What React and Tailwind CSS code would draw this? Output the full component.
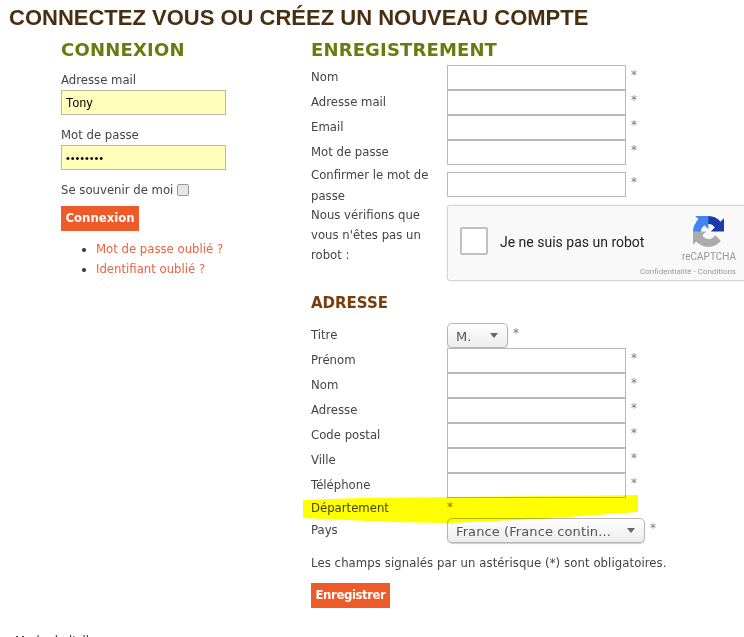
import React from 'react';

const field = 'w-[179px] h-[25px] border border-[#b9b9b9] bg-white block';

function Star({ className = '' }) {
  return <span className={`text-[#777] text-[12px] leading-none ${className}`}>*</span>;
}

function Row({ label }) {
  return (
    <div className="flex h-[25px]">
      <div className="w-[136px] shrink-0 leading-[25px]">{label}</div>
      <input className={field} />
      <Star className="ml-[5px] mt-[4px]" />
    </div>
  );
}

function Select({ width, value }) {
  return (
    <div
      className={`${width} h-[25px] flex items-center justify-between pl-[8px] pr-[9px] border border-[#b4b4b4] rounded-[5px] bg-gradient-to-b from-white to-[#ececec] shadow-[0_1px_1px_#ccc]`}
    >
      <span className="pt-[2px] text-[#555] text-[13px] tracking-[0.1px] whitespace-nowrap">{value}</span>
      <svg width="8" height="5" viewBox="0 0 8 5"><path d="M0 0h8L4 5z" fill="#666" /></svg>
    </div>
  );
}

function RecaptchaLogo() {
  return (
    <svg width="31" height="31" viewBox="0 0 64 64">
      <path d="M64 31.955l-.033-1.37V4.687l-7.16 7.16C50.948 4.674 42.033.093 32.05.093c-10.4 0-19.622 4.96-25.458 12.64l11.736 11.86a15.55 15.55 0 0 1 4.754-5.334c2.05-1.6 4.952-2.906 8.968-2.906.485 0 .86.057 1.135.163 4.976.393 9.288 3.14 11.828 7.124l-8.307 8.307c10.522-.04 22.4-.066 27.295.005" fill="#1c3aa9" />
      <path d="M31.862.094l-1.37.033H4.594l7.16 7.16C4.58 13.147 0 22.06 0 32.046c0 10.4 4.96 19.622 12.64 25.458L24.5 45.768a15.55 15.55 0 0 1-5.334-4.754c-1.6-2.05-2.906-4.952-2.906-8.968 0-.485.057-.86.163-1.135.393-4.976 3.14-9.288 7.124-11.828l8.307 8.307c-.04-10.522-.066-22.4.005-27.295" fill="#4285f4" />
      <path d="M.001 32.045l.033 1.37v25.898l7.16-7.16c5.86 7.173 14.774 11.754 24.76 11.754 10.4 0 19.622-4.96 25.458-12.64l-11.736-11.86a15.55 15.55 0 0 1-4.754 5.334c-2.05 1.6-4.952 2.906-8.968 2.906-.485 0-.86-.057-1.135-.163-4.976-.393-9.288-3.14-11.828-7.124l8.307-8.307c-10.522.04-22.4.066-27.295-.005" fill="#ababab" />
    </svg>
  );
}

export default function App() {
  return (
    <div className="relative w-[744px] h-[637px] overflow-hidden bg-white text-[#444] text-[11.7px] leading-[20px] font-['DejaVu_Sans',sans-serif]">
      <h1 className="pl-[9px] pt-[6px] h-[37px] text-[22px] leading-[24px] font-bold text-[#4a2e12] font-['Liberation_Sans',sans-serif] whitespace-nowrap">
        CONNECTEZ VOUS OU CRÉEZ UN NOUVEAU COMPTE
      </h1>

      <div className="flex">
        {/* colonne connexion */}
        <div className="w-[250px] shrink-0 ml-[61px]">
          <h2 className="h-[26px] pt-[1px] text-[18px] leading-[24px] tracking-[0.2px] font-bold text-[#6b7a0d]">CONNEXION</h2>
          <div className="mt-[7px] h-[20px]">Adresse mail</div>
          <input defaultValue="Tony" className="w-[165px] h-[25px] block border border-[#b9b9a9] bg-[#ffffbb] px-[4px] text-black text-[12px] font-['Liberation_Sans',sans-serif] tracking-[0.4px]" />
          <div className="mt-[10px] h-[20px]">Mot de passe</div>
          <input type="password" defaultValue="password" className="w-[165px] h-[25px] block border border-[#b9b9a9] bg-[#ffffbb] px-[4px] text-black text-[11px] tracking-[0.9px] font-['Liberation_Sans',sans-serif]" />
          <div className="mt-[10px] h-[25px] flex items-start">
            <span>Se souvenir de moi</span>
            <span className="ml-[4px] mt-[4px] w-[12px] h-[12px] rounded-[2px] border border-[#999] bg-[#e6e6e6]"></span>
          </div>
          <div className="mt-[1px] w-[78px] h-[25px] bg-[#ee5a28] text-white font-bold leading-[25px] text-center">Connexion</div>
          <ul className="mt-[8px] pl-[35px] list-disc text-[#e8633f] marker:text-[#333]">
            <li>Mot de passe oublié ?</li>
            <li>Identifiant oublié ?</li>
          </ul>
        </div>

        {/* colonne enregistrement */}
        <div className="flex-1 min-w-0">
          <h2 className="h-[26px] pt-[1px] text-[18px] leading-[24px] tracking-[0.15px] font-bold text-[#6b7a0d]">ENREGISTREMENT</h2>
          <div className="mt-[2px]">
            <Row label="Nom" />
            <Row label="Adresse mail" />
            <Row label="Email" />
            <Row label="Mot de passe" />
            <div className="flex h-[39px]">
              <div className="w-[136px] shrink-0 leading-[21px]">Confirmer le mot de passe</div>
              <input className={`${field} mt-[7px]`} />
              <Star className="ml-[5px] mt-[11px]" />
            </div>
            <div className="flex mt-[1px]">
              <div className="w-[136px] shrink-0 pr-[10px]">Nous vérifions que vous n'êtes pas un robot :</div>
              <div className="shrink-0 w-[302px] h-[76px] rounded-[3px] border border-[#d6d6d6] bg-[#f9f9f9] flex shadow-[0_0_2px_#ddd]">
                <span className="shrink-0 ml-[12px] mt-[21px] w-[28px] h-[28px] rounded-[2px] border-2 border-[#c1c1c1] bg-white"></span>
                <span className="ml-[12px] mt-[26px] text-[14px] text-[#222] font-['Roboto',sans-serif] whitespace-nowrap">Je ne suis pas un robot</span>
                <div className="ml-auto mr-[12px] mt-[10px] w-[54px] flex flex-col items-end shrink-0">
                  <div className="mr-[12px] h-[31px]"><RecaptchaLogo /></div>
                  <span className="text-[10px] leading-[12px] mt-[4px] text-[#999] font-['Roboto',sans-serif]">reCAPTCHA</span>
                  <span className="text-[8px] leading-[10px] mt-[4px] text-[#999] font-['Roboto',sans-serif] whitespace-nowrap">Confidentialité - Conditions</span>
                </div>
              </div>
            </div>
          </div>

          <h3 className="mt-[12px] h-[22px] text-[15px] leading-[20px] font-bold text-[#7a3c0c]">ADRESSE</h3>
          <div className="mt-[8px]">
            <div className="flex h-[25px]">
              <div className="w-[136px] shrink-0 leading-[25px]">Titre</div>
              <Select width="w-[61px]" value="M." />
              <Star className="ml-[5px] mt-[4px]" />
            </div>
            <Row label="Prénom" />
            <Row label="Nom" />
            <Row label="Adresse" />
            <Row label="Code postal" />
            <Row label="Ville" />
            <Row label="Téléphone" />
            <div className="flex h-[20px]">
              <div className="w-[136px] shrink-0 leading-[21px]">Département</div>
              <Star className="mt-[3px]" />
            </div>
            <div className="flex h-[25px]">
              <div className="w-[136px] shrink-0 leading-[25px]">Pays</div>
              <Select width="w-[198px]" value="France (France contin..." />
              <Star className="ml-[5px] mt-[4px]" />
            </div>
          </div>
          <p className="mt-[10px] whitespace-nowrap tracking-[0.08px]">Les champs signalés par un astérisque (*) sont obligatoires.</p>
          <div className="mt-[10px] w-[79px] h-[25px] bg-[#ee5a28] text-white font-bold tracking-[-0.4px] leading-[25px] text-center">Enregistrer</div>
        </div>
      </div>

      {/* surlignage jaune */}
      <svg className="absolute left-[300px] top-[490px] mix-blend-multiply" width="345" height="40" viewBox="0 0 345 40">
        <path d="M3 10 L60 8 L150 7 L270 6 L338 5 L338 22 L240 29 L150 33 L90 32 L3 28 Z" fill="#ffff00" />
      </svg>

      <div className="absolute left-[15px] top-[631px] text-[#333] whitespace-nowrap">Mode de l'album</div>
    </div>
  );
}
